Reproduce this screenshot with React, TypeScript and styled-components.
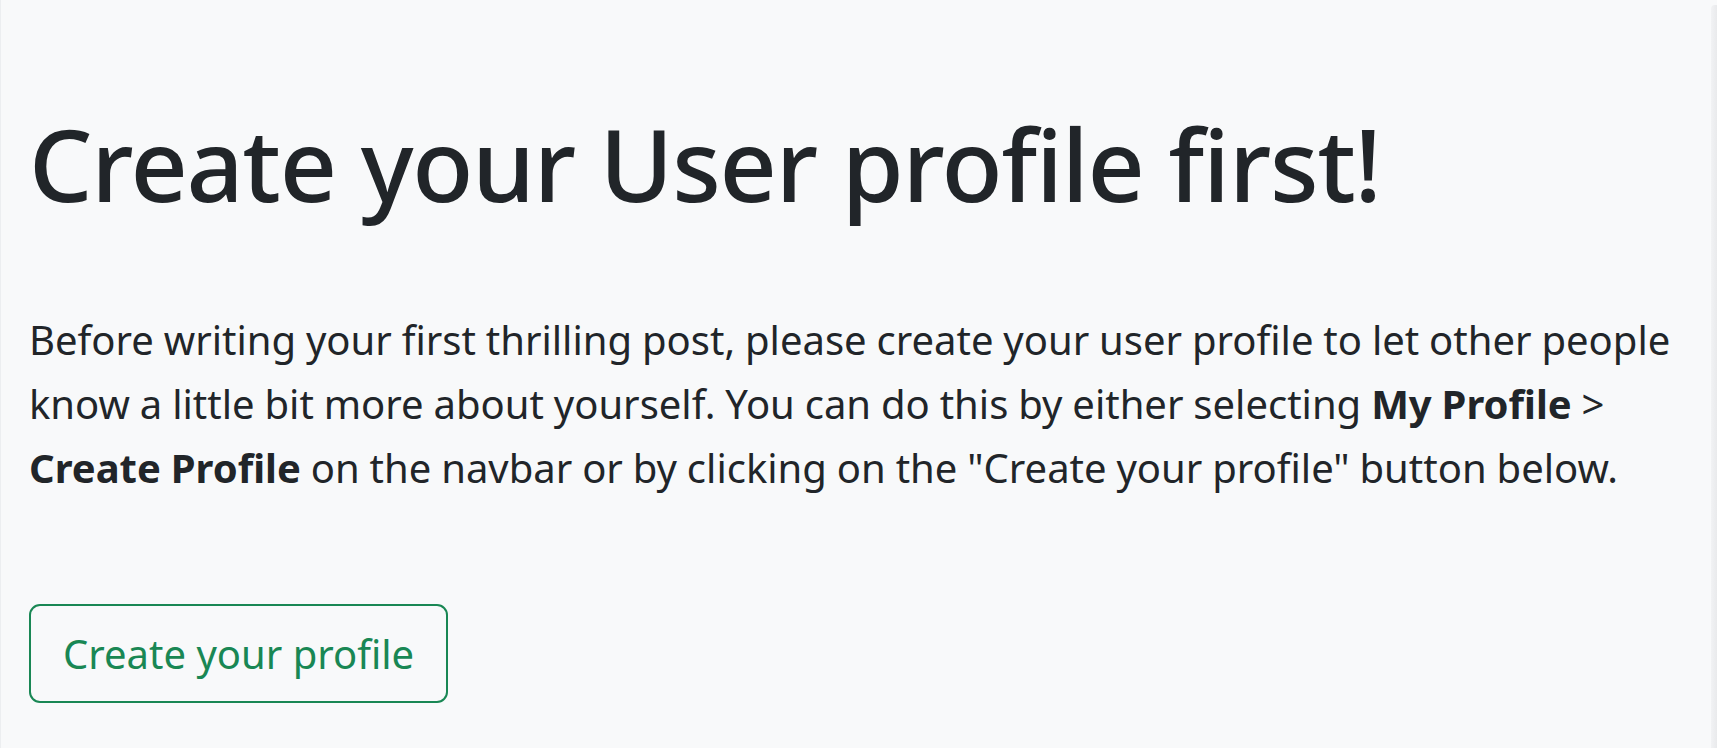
import React from 'react';
import styled, { createGlobalStyle } from 'styled-components';

const GlobalStyle = createGlobalStyle`
  html, body {
    margin: 0;
    padding: 0;
    background: #f8f9fa;
  }
  body {
    font-family: "Noto Sans", "Open Sans", Arial, sans-serif;
    color: #212529;
  }
`;

const Page = styled.div`
  display: flex;
  min-height: 748px;
`;

const Content = styled.main`
  flex: 1;
  background: #f8f9fa;
  border-left: 1px solid #eceef0;
  padding: 103px 28px 0 28px;
`;

const EdgeShadow = styled.div`
  width: 6px;
  margin-top: 5px;
  border-top-left-radius: 4px;
  background: linear-gradient(to right, #f1f2f4, #e9eaec);
`;

const Title = styled.h1`
  margin: 0;
  font-size: 100px;
  line-height: 121px;
  font-weight: 500;
  letter-spacing: -1.2px;
`;

const Lead = styled.p`
  margin: 84px 0 0;
  font-size: 40px;
  line-height: 64px;
  font-weight: 400;
  word-spacing: -0.5px;

  strong {
    font-weight: 700;
  }
`;

const OutlineButton = styled.button`
  margin-top: 104px;
  padding: 16px 32px;
  font-family: inherit;
  font-size: 40px;
  line-height: 63px;
  color: #198754;
  background: transparent;
  border: 2px solid #198754;
  border-radius: 11px;
  cursor: pointer;
`;

export default function App() {
  return (
    <>
      <GlobalStyle />
      <Page>
        <Content>
          <Title>Create your User profile first!</Title>
          <Lead>
            Before writing your first thrilling post, please create your user profile to let other
            people know a little bit more about yourself. You can do this by either selecting{' '}
            <strong>My Profile</strong> &gt; <strong>Create Profile</strong> on the navbar or by
            clicking on the "Create your profile" button below.
          </Lead>
          <OutlineButton>Create your profile</OutlineButton>
        </Content>
        <EdgeShadow />
      </Page>
    </>
  );
}
